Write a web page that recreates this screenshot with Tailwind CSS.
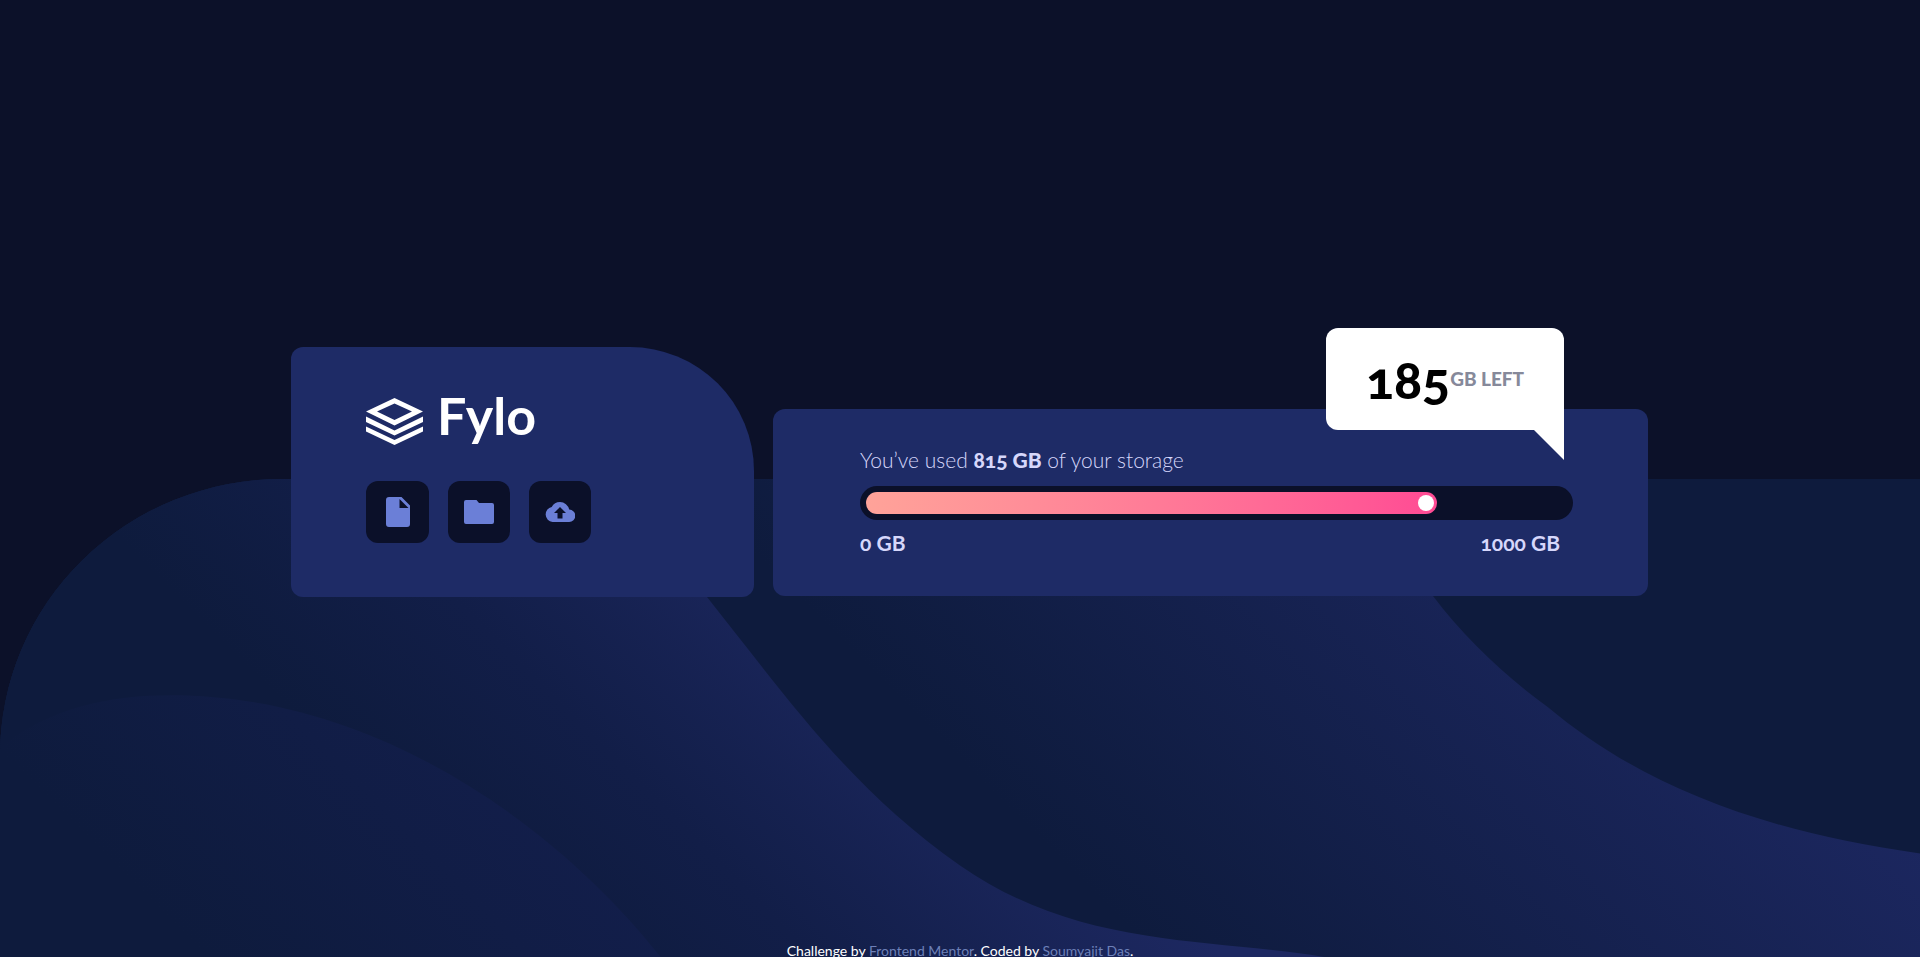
<!DOCTYPE html>
<html lang="en">
<head>
<meta charset="utf-8">
<meta name="viewport" content="width=device-width, initial-scale=1">
<title>Fylo data storage</title>
<script src="https://cdn.jsdelivr.net/npm/@tailwindcss/browser@4"></script>
</head>
<body class="relative h-screen overflow-hidden bg-[#0c1129] font-['Lato','Open_Sans',sans-serif] oldstyle-nums">

<!-- Wavy backdrop -->
<svg class="absolute inset-x-0 bottom-0 -z-10 h-1/2 w-full" viewBox="0 0 1920 478" preserveAspectRatio="none" aria-hidden="true">
  <defs>
    <linearGradient id="right" gradientUnits="userSpaceOnUse" x1="1000" y1="321" x2="1450" y2="-129"><stop offset="0" stop-color="#0e1b3d"/><stop offset="1" stop-color="#1c2760"/></linearGradient>
    <linearGradient id="middle" gradientUnits="userSpaceOnUse" x1="300" y1="241" x2="645" y2="-104"><stop offset="0" stop-color="#0e1b3d"/><stop offset=".4" stop-color="#121e48"/><stop offset="1" stop-color="#1d2861"/></linearGradient>
    <linearGradient id="left" gradientUnits="userSpaceOnUse" x1="50" y1="321" x2="375" y2="-4"><stop offset="0" stop-color="#0e1b3d"/><stop offset="1" stop-color="#141f4f"/></linearGradient>
    <clipPath id="edge"><path d="M0 478V276A282 276 0 0 1 282 0H1920V478Z"/></clipPath>
  </defs>
  <g clip-path="url(#edge)">
    <path d="M0 0H1920V478H0Z" fill="#0e1b3d"/>
    <path d="M0 0H1362C1388 40 1405 80 1433 117C1464 158 1505 197 1548 228C1640 305 1760 352 1920 374V478H0Z" fill="url(#right)"/>
    <path d="M0 0H570C620 10 655 54 707 118C790 222 850 309 960 386C1080 470 1210 458 1327 478H0Z" fill="url(#middle)"/>
    <path d="M0 268C50 228 110 216 171 216C380 216 560 350 661 478H0Z" fill="url(#left)"/>
  </g>
</svg>

<main class="flex min-h-[calc(100vh-13px)] items-center justify-center pl-[19px]">
  <div class="flex w-full max-w-[1357px] items-end gap-[19px]">

    <section class="h-[250px] w-[463px] shrink-0 rounded-xl rounded-tr-[124px] bg-[#1e2b66] px-[75px] pt-11" aria-label="Fylo">
      <div class="flex h-12 items-center gap-[14px] text-white">
        <svg class="mt-3 h-[47px] w-[57px]" viewBox="0 0 57 47" fill="currentColor" aria-hidden="true">
          <path fill-rule="evenodd" d="M28.500 0L57 13.500L28.500 27.500L0 13.500ZM28.500 5.500L11 13.500L28.500 22L46 13.500Z"/>
          <path d="M0 18.500L28.500 32.500L57 18.500V24L28.500 37.500L0 24Z"/>
          <path d="M0 28.500L28.500 42L57 28.500V33.500L28.500 47L0 33.500Z"/>
        </svg>
        <h1 class="text-[52px] leading-[48px] font-bold">Fylo</h1>
      </div>
      <div class="mt-[42px] flex gap-[19px] text-[#6b7fd7]">
        <button class="grid h-[62px] w-[63px] place-items-center rounded-xl bg-[#0b1029]" aria-label="Document">
          <svg class="h-[30px] w-6" viewBox="0 0 24 30" fill="currentColor"><path d="M3 0H15.500L24 8.500V27a3 3 0 0 1-3 3H3a3 3 0 0 1-3-3V3a3 3 0 0 1 3-3ZM13.500 2V11H22.500Z" fill-rule="evenodd"/></svg>
        </button>
        <button class="grid size-[62px] place-items-center rounded-xl bg-[#0b1029]" aria-label="Folder">
          <svg class="h-6 w-[30px]" viewBox="0 0 30 24" fill="currentColor"><path d="M2 0H12.500L15 3H28a2 2 0 0 1 2 2V22a2 2 0 0 1-2 2H2a2 2 0 0 1-2-2V2a2 2 0 0 1 2-2Z"/></svg>
        </button>
        <button class="grid size-[62px] place-items-center rounded-xl bg-[#0b1029]" aria-label="Upload">
          <svg class="h-5 w-[30px]" viewBox="0 0 30 20" fill="currentColor"><path fill-rule="evenodd" d="M24.200 7.600A9.500 9.500 0 0 0 15 0A9.600 9.600 0 0 0 6.700 5A7.600 7.600 0 0 0 7.500 20H24A6.200 6.200 0 0 0 24.200 7.600ZM17.500 11V16.500H12.500V11H9L15 5L21 11Z"/></svg>
        </button>
      </div>
    </section>

    <section class="relative mb-px h-[187px] min-w-0 flex-1 rounded-xl bg-[#1e2b66] pr-[75px] pl-[87px] pt-[37px] text-[21px] text-[#d6d7fb]" aria-label="Storage">
      <p class="leading-7 font-light">You’ve used <b class="font-black">815 GB</b> of your storage</p>
      <div class="mt-3 h-[34px] rounded-full bg-[#0b1029] p-[6px]" role="progressbar" aria-label="Storage used" aria-valuemin="0" aria-valuemax="1000" aria-valuenow="815">
        <div class="flex h-[22px] items-center justify-end rounded-full bg-linear-to-r from-[#ffa399] to-[#ff4a94] pr-[3px]" style="width:81.500%">
          <div class="size-4 rounded-full bg-white"></div>
        </div>
      </div>
      <div class="mt-[9px] flex justify-between pr-[13px] leading-7 font-bold"><span>0 GB</span><span>1000 GB</span></div>

      <div class="absolute -top-[81px] right-[84px] flex h-[102px] w-[238px] items-center justify-center rounded-xl rounded-br-none bg-white">
        <span class="text-[52px] leading-[56px] font-black text-black">185</span>
        <span class="text-[19px] font-black text-[#86899a]">GB LEFT</span>
        <svg class="absolute top-full right-0 size-[30px]" viewBox="0 0 30 30" aria-hidden="true"><path d="M0 0H30V30Z" fill="#fff"/></svg>
      </div>
    </section>
  </div>
</main>

<footer class="text-center text-sm leading-[14px] text-white">
  Challenge by <a class="text-[#6d80b8]" href="#">Frontend Mentor</a>. Coded by <a class="text-[#6d80b8]" href="#">Soumyajit Das</a>.
</footer>
</body>
</html>
